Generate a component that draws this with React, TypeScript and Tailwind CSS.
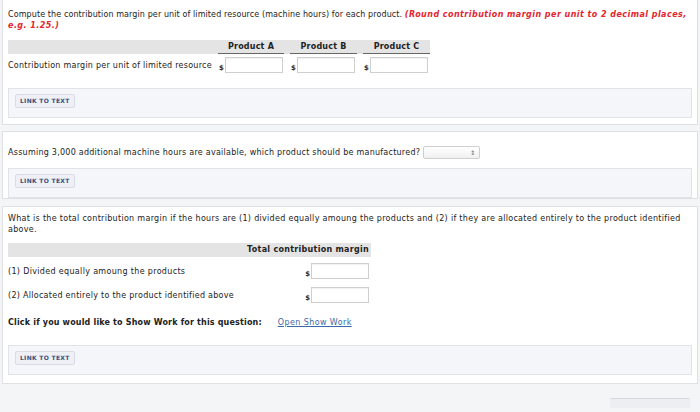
import React from 'react';

const LinkBox: React.FC<{ className?: string }> = ({ className = '' }) => (
  <div className={`border border-[#e1e3e8] bg-[#f5f6f9] h-[30px] pl-[6px] pt-[5px] ${className}`}>
    <span className="inline-block border border-[#d9dce6] bg-[#eef0f6] rounded-[2px] px-[4px] h-[14px] leading-[12px] text-[6px] font-bold text-[#3d4d7e] tracking-[0.3px]">
      LINK TO TEXT
    </span>
  </div>
);

const DollarInput: React.FC<{ className?: string }> = ({ className = '' }) => (
  <div className={`flex items-end ${className}`}>
    <span className="text-[7px] font-bold text-[#333] mr-[1px] leading-[8px] mb-[1px]">$</span>
    <div className="w-[58px] h-[16px] bg-white border border-[#cfcfcf] shadow-[inset_0_1px_1px_rgba(0,0,0,0.06)]" />
  </div>
);

export default function App() {
  return (
    <div
      className="w-[700px] h-[412px] overflow-hidden bg-[#f4f5f7] text-[#222] text-[8px] leading-[11px]"
      style={{ fontFamily: '"DejaVu Sans", Verdana, sans-serif' }}
    >
      {/* Panel 1 */}
      <div className="mx-[2px] bg-white border border-[#dfe0e3] border-t-0 px-[5px] pt-[9px] pb-[6px] h-[125px]">
        <p className="tracking-[0.1px]">
          Compute the contribution margin per unit of limited resource (machine hours) for each product.{' '}
          <span className="text-[#e3262f] font-bold italic tracking-[0.45px]">
            (Round contribution margin per unit to 2 decimal places, e.g. 1.25.)
          </span>
        </p>
        <div className="mt-[9px] w-[422px]">
          <div className="flex h-[14px] bg-[#e4e4e4]">
            <div className="w-[210px] shrink-0" />
            <div className="w-[66px] border-b border-[#666] text-center font-bold leading-[13px] tracking-[0.2px]">Product A</div>
            <div className="w-[67px] ml-[6px] border-b border-[#666] text-center font-bold leading-[13px] tracking-[0.2px]">Product B</div>
            <div className="w-[67px] ml-[6px] border-b border-[#666] text-center font-bold leading-[13px] tracking-[0.2px]">Product C</div>
          </div>
          <div className="flex items-center mt-[3px] h-[16px]">
            <div className="w-[210px] shrink-0 tracking-[0.25px]">Contribution margin per unit of limited resource</div>
            <DollarInput className="w-[66px] pl-[1px]" />
            <DollarInput className="w-[67px] ml-[6px] pl-[1px]" />
            <DollarInput className="w-[67px] ml-[6px] pl-[1px]" />
          </div>
        </div>
        <LinkBox className="mt-[15px]" />
      </div>

      {/* Panel 2 */}
      <div className="mt-[6px] mx-[2px] bg-white border border-[#dfe0e3] px-[5px] pt-[13px] pb-[2px] h-[68px]">
        <div className="flex items-center h-[14px]">
          <span className="tracking-[0.25px]">
            Assuming 3,000 additional machine hours are available, which product should be manufactured?
          </span>
          <div className="ml-[3px] w-[57px] h-[13px] border border-[#cfcfcf] rounded-[2px] bg-gradient-to-b from-white to-[#f0f0f0] flex items-center justify-end pr-[4px] text-[6px] text-[#666]">
            ⇕
          </div>
        </div>
        <LinkBox className="mt-[9px]" />
      </div>

      {/* Panel 3 */}
      <div className="mt-[7px] mx-[2px] bg-white border border-[#dfe0e3] px-[5px] pt-[6px] pb-[6px] h-[178px]">
        <p className="w-[680px] tracking-[0.3px]">
          What is the total contribution margin if the hours are (1) divided equally amoung the products and (2) if they are allocated entirely to the product identified above.
        </p>
        <div className="mt-[8px] w-[363px]">
          <div className="h-[14px] bg-[#e4e4e4] text-right font-bold pr-[2px] leading-[14px] tracking-[0.28px]">
            Total contribution margin
          </div>
          <div className="flex items-center justify-between mt-[6px] h-[16px]">
            <span className="tracking-[0.33px]">(1) Divided equally amoung the products</span>
            <DollarInput className="mr-[2px]" />
          </div>
          <div className="flex items-center justify-between mt-[8px] h-[16px]">
            <span className="tracking-[0.28px]">(2) Allocated entirely to the product identified above</span>
            <DollarInput className="mr-[2px]" />
          </div>
        </div>
        <div className="mt-[14px] flex">
          <span className="font-bold tracking-[0.17px]">Click if you would like to Show Work for this question:</span>
          <span className="ml-[16px] text-[#3a69a8] underline tracking-[0.4px]">Open Show Work</span>
        </div>
        <LinkBox className="mt-[17px]" />
      </div>

      <div className="flex justify-end pr-[10px] pt-[14px]">
        <div className="w-[80px] h-[10px] border-t border-[#d5d7dc] bg-[#eceef1] rounded-t-[2px]" />
      </div>
    </div>
  );
}
